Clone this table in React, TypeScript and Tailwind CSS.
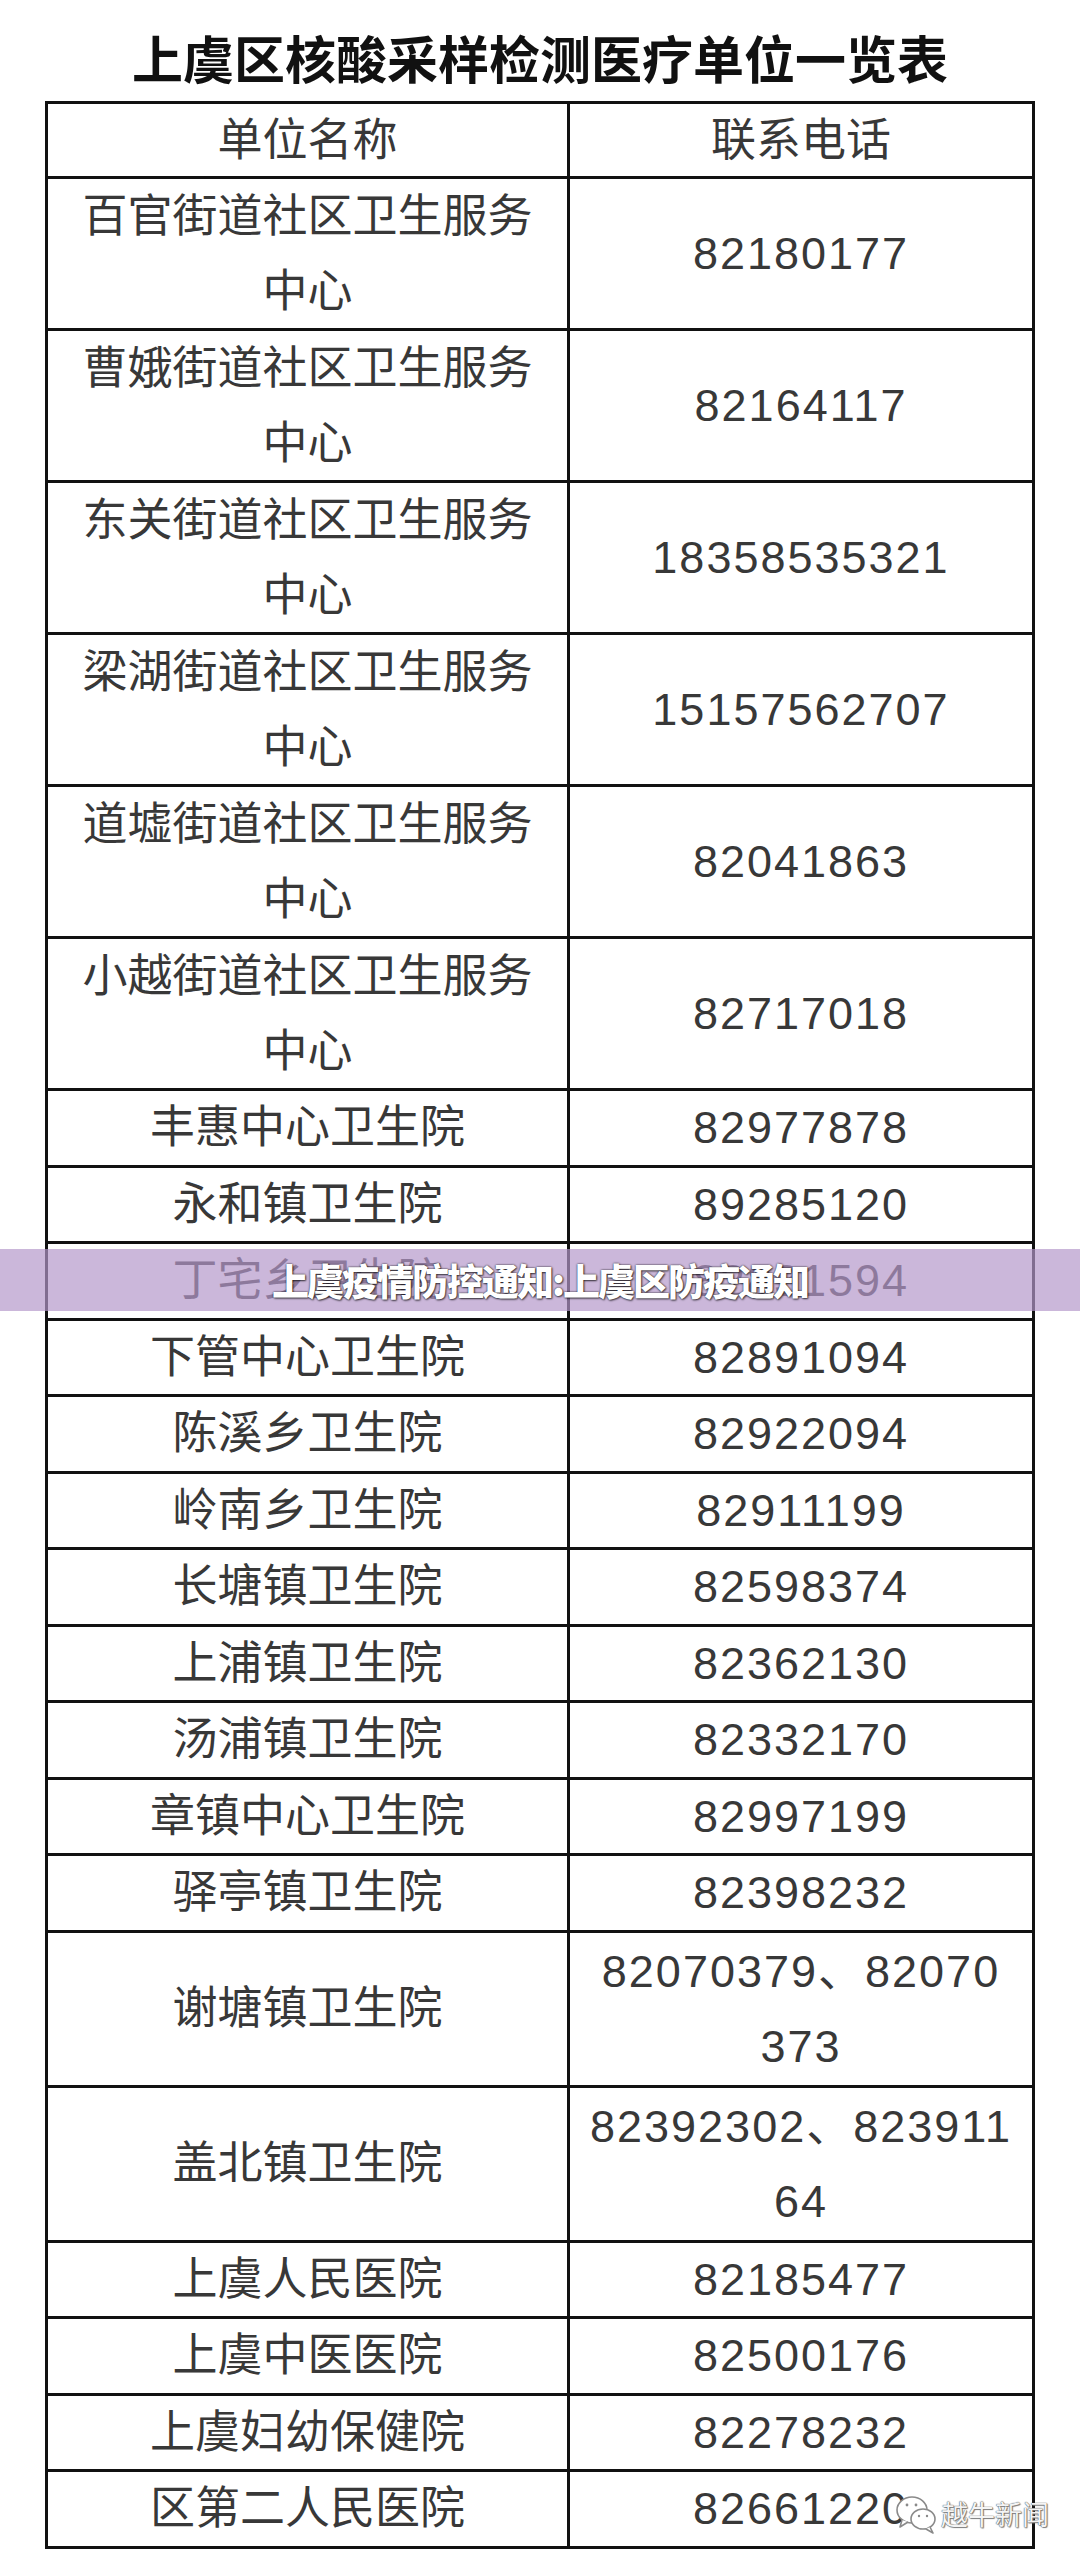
import React from "react";

type Row = {
  name: string[];
  tel: string[];
  size: "single" | "double" | "tall";
};

const rows: Row[] = [
  { name: ["百官街道社区卫生服务", "中心"], tel: ["82180177"], size: "double" },
  { name: ["曹娥街道社区卫生服务", "中心"], tel: ["82164117"], size: "double" },
  { name: ["东关街道社区卫生服务", "中心"], tel: ["18358535321"], size: "double" },
  { name: ["梁湖街道社区卫生服务", "中心"], tel: ["15157562707"], size: "double" },
  { name: ["道墟街道社区卫生服务", "中心"], tel: ["82041863"], size: "double" },
  { name: ["小越街道社区卫生服务", "中心"], tel: ["82717018"], size: "double" },
  { name: ["丰惠中心卫生院"], tel: ["82977878"], size: "single" },
  { name: ["永和镇卫生院"], tel: ["89285120"], size: "single" },
  { name: ["丁宅乡卫生院"], tel: ["82831594"], size: "single" },
  { name: ["下管中心卫生院"], tel: ["82891094"], size: "single" },
  { name: ["陈溪乡卫生院"], tel: ["82922094"], size: "single" },
  { name: ["岭南乡卫生院"], tel: ["82911199"], size: "single" },
  { name: ["长塘镇卫生院"], tel: ["82598374"], size: "single" },
  { name: ["上浦镇卫生院"], tel: ["82362130"], size: "single" },
  { name: ["汤浦镇卫生院"], tel: ["82332170"], size: "single" },
  { name: ["章镇中心卫生院"], tel: ["82997199"], size: "single" },
  { name: ["驿亭镇卫生院"], tel: ["82398232"], size: "single" },
  { name: ["谢塘镇卫生院"], tel: ["82070379、82070", "373"], size: "tall" },
  { name: ["盖北镇卫生院"], tel: ["82392302、823911", "64"], size: "tall" },
  { name: ["上虞人民医院"], tel: ["82185477"], size: "single" },
  { name: ["上虞中医医院"], tel: ["82500176"], size: "single" },
  { name: ["上虞妇幼保健院"], tel: ["82278232"], size: "single" },
  { name: ["区第二人民医院"], tel: ["82661220"], size: "single" },
];

// 行高には下罫線 3px を含む (border-box)
const heights = {
  single: "h-[76.5px]",
  double: "h-[152px]",
  tall: "h-[155px]",
};

const font = "font-['Liberation_Sans','Noto_Sans_CJK_SC',sans-serif]";

function Cell({ lines, left, mono }: { lines: string[]; left?: boolean; mono?: boolean }) {
  return (
    <div
      className={`flex flex-col items-center justify-center text-center leading-[75px] text-[45px] text-[#383838] ${
        left ? "w-[522px] border-r-[3px] border-[#111]" : "flex-1"
      } ${mono ? "tracking-[2px]" : ""}`}
    >
      {lines.map((l) => (
        <div key={l} className="whitespace-nowrap">
          {l}
        </div>
      ))}
    </div>
  );
}

function Watermark() {
  return (
    <div className="absolute left-[893px] top-[2490px] flex items-center">
      <svg width="46" height="46" viewBox="0 0 46 46">
        <ellipse cx="19" cy="20" rx="15" ry="13" fill="#fff" stroke="#8a8a8a" strokeWidth="1.6" />
        <path d="M9 30 L7 37 L15 32" fill="#fff" stroke="#8a8a8a" strokeWidth="1.6" strokeLinejoin="round" />
        <ellipse cx="30" cy="29" rx="12" ry="10" fill="#fff" stroke="#8a8a8a" strokeWidth="1.6" />
        <path d="M37 37 L40 43 L33 39" fill="#fff" stroke="#8a8a8a" strokeWidth="1.6" strokeLinejoin="round" />
        <circle cx="14" cy="15" r="1.4" fill="#8a8a8a" />
        <circle cx="23" cy="15" r="1.4" fill="#8a8a8a" />
        <circle cx="26" cy="26" r="1.2" fill="#8a8a8a" />
        <circle cx="34" cy="26" r="1.2" fill="#8a8a8a" />
      </svg>
      <span className="ml-[2px] text-[27px] leading-none text-[#f4f4f4] font-['Noto_Sans_CJK_SC',sans-serif] [text-shadow:0_0_1px_#555,0_0_1px_#555,1px_1px_1px_#888]">
        越牛新闻
      </span>
    </div>
  );
}

export default function App() {
  return (
    <div className={`relative w-[1080px] h-[2561px] bg-white ${font}`}>
      <div className="h-[101px] pt-[36px] text-center">
        <h1 className="text-[51px] leading-[52px] font-bold text-[#111]">上虞区核酸采样检测医疗单位一览表</h1>
      </div>

      <div className="mx-auto w-[990px] border-x-[3px] border-t-[3px] border-[#111]">
        <div className="flex h-[75px] border-b-[3px] border-[#111]">
          <Cell lines={["单位名称"]} left />
          <Cell lines={["联系电话"]} />
        </div>
        {rows.map((r) => (
          <div key={r.name[0]} className={`flex ${heights[r.size]} border-b-[3px] border-[#111]`}>
            <Cell lines={r.name} left />
            <Cell lines={r.tel} mono />
          </div>
        ))}
      </div>

      {/* 横幅 */}
      <div className="absolute left-0 right-0 top-[1249px] h-[62px] bg-[rgba(180,151,201,0.69)] flex items-center justify-center">
        <span className="font-['Noto_Sans_CJK_SC',sans-serif] font-black text-[37px] tracking-[-2px] text-white leading-none [text-shadow:0_0_2px_rgba(0,0,0,0.9),1px_1px_2px_rgba(0,0,0,0.6)]">
          上虞疫情防控通知:上虞区防疫通知
        </span>
      </div>

      <Watermark />
    </div>
  );
}
